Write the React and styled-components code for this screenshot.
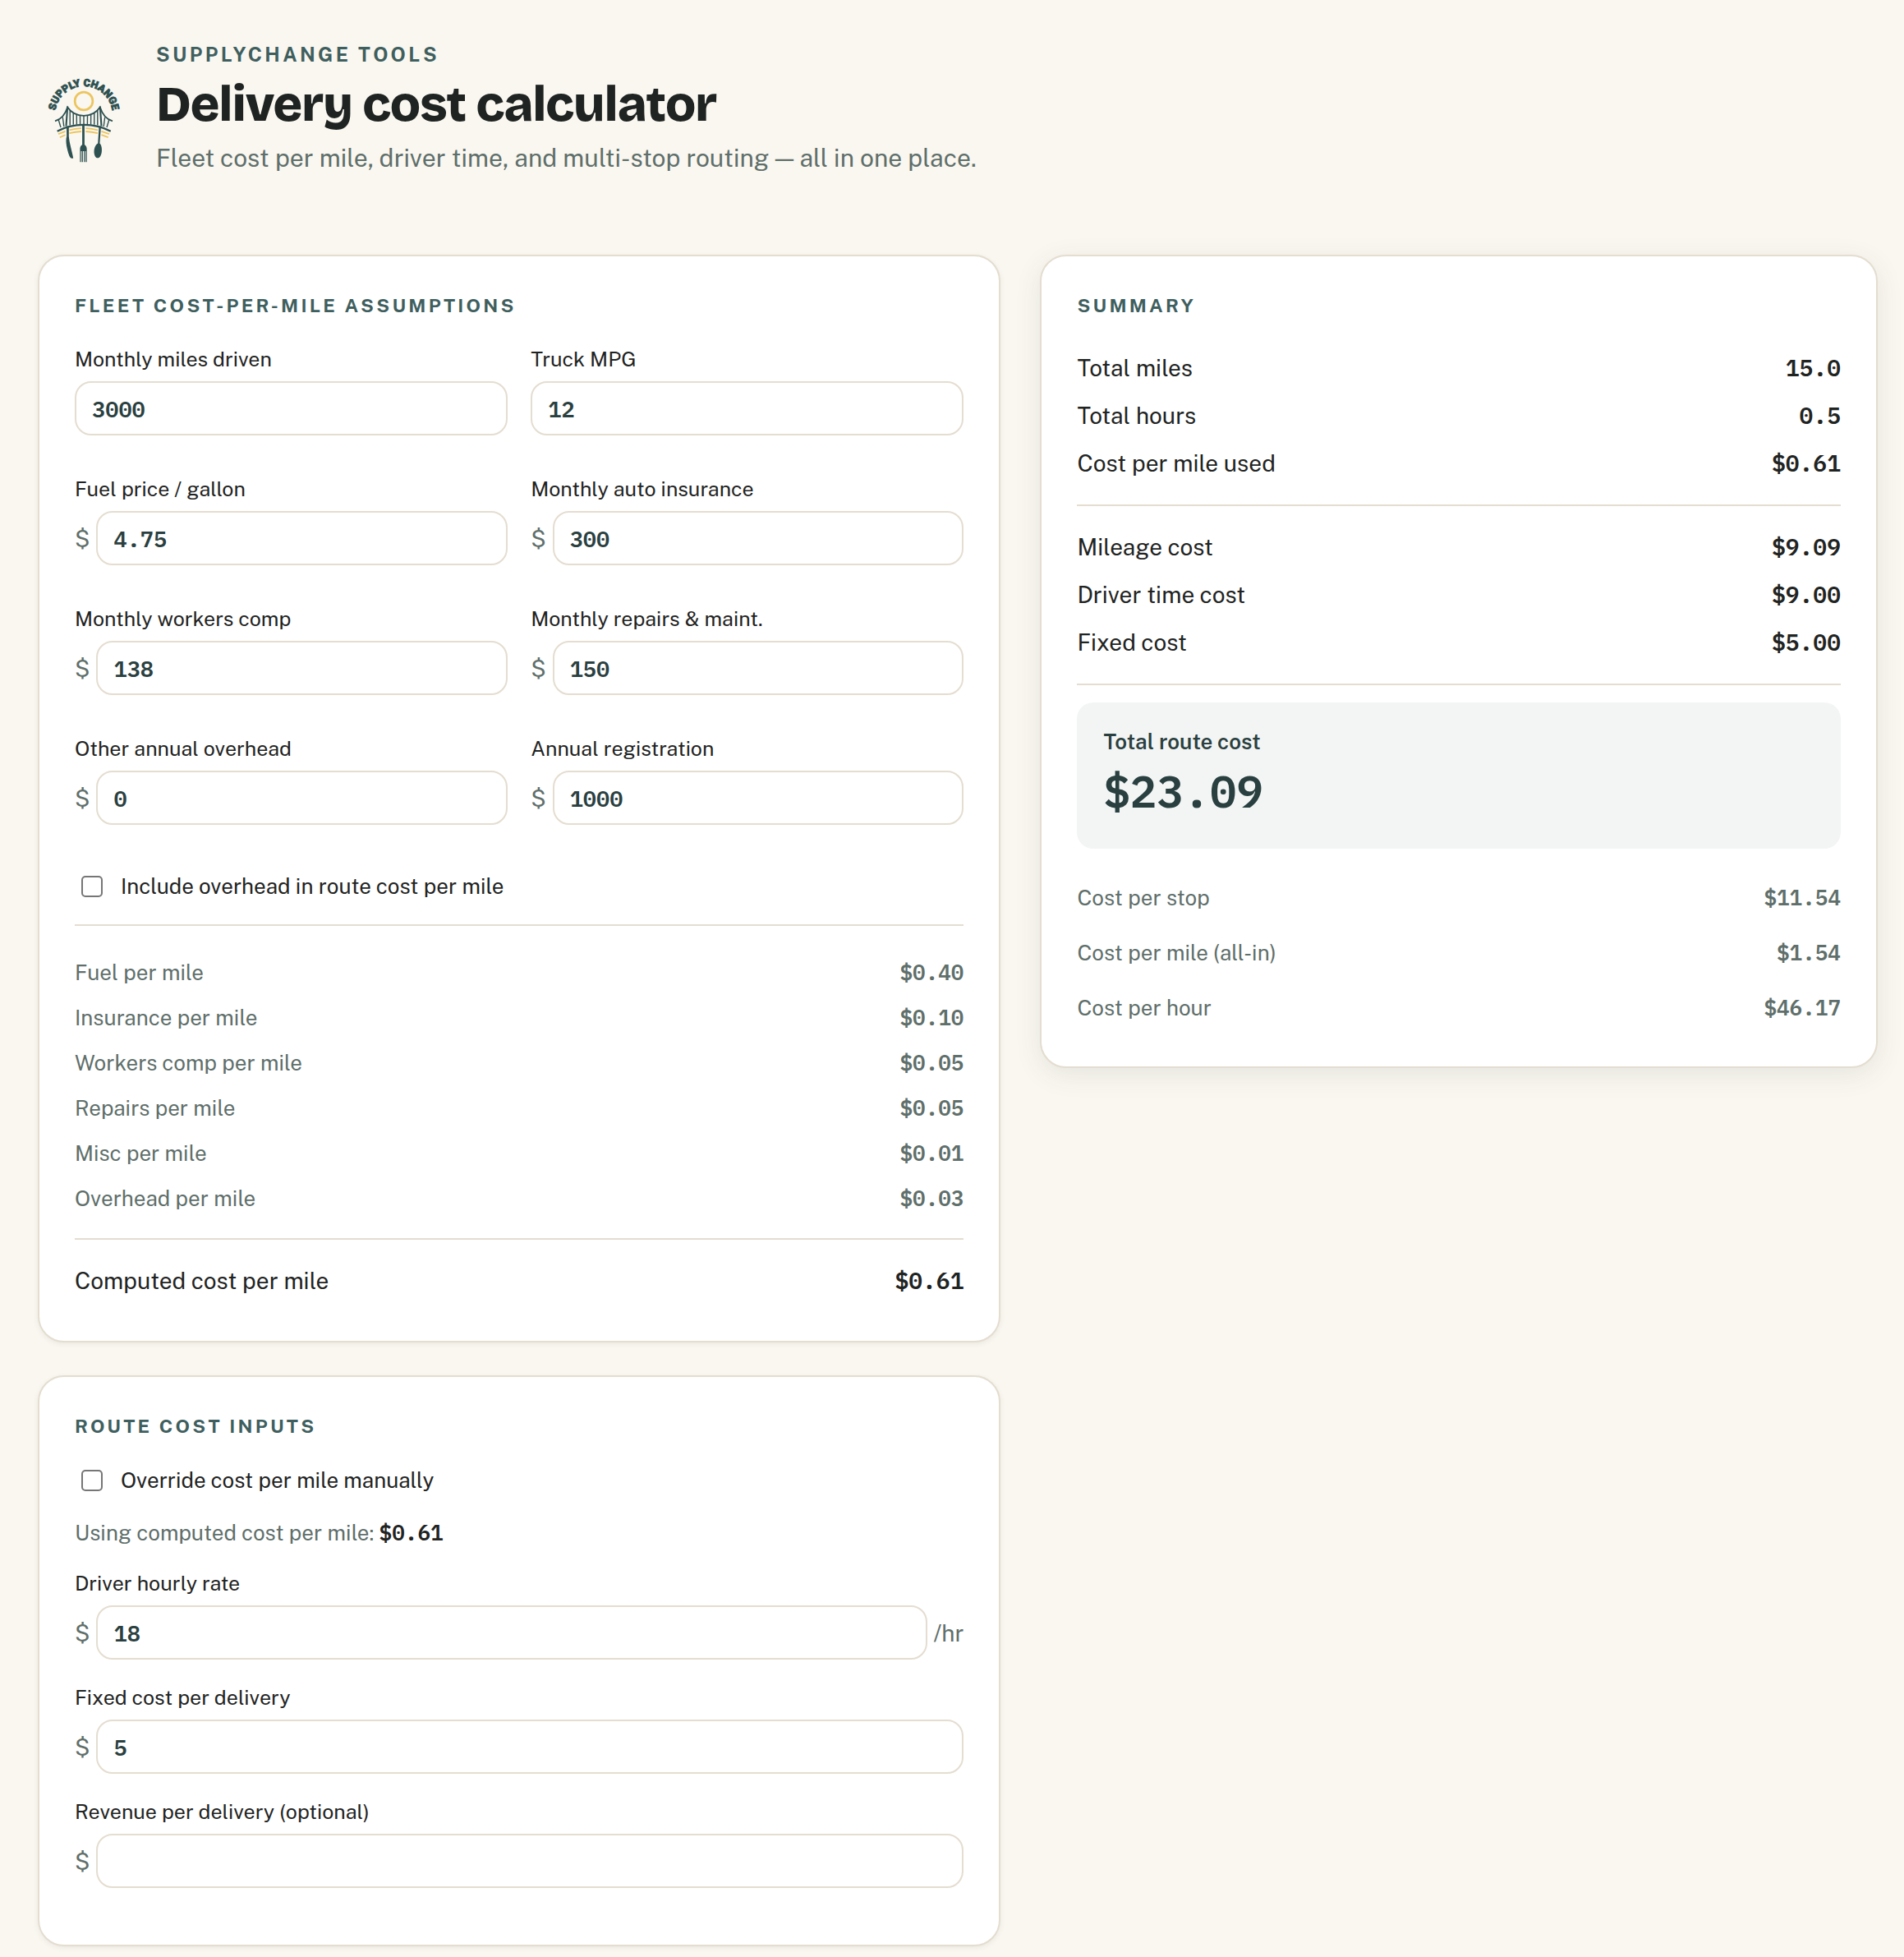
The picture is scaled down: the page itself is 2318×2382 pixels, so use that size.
import React from 'react';
import styled, { createGlobalStyle } from 'styled-components';

const GlobalStyle = createGlobalStyle`
  :root {
    --cream: #faf7f0;
    --sand: #e4ddd0;
    --ink: #1f2423;
    --muted: #5f6f6b;
    --teal: #3f5f5f;
    --deep: #2a4040;
    --sans: 'Public Sans', Inter, 'Liberation Sans', sans-serif;
    --display: 'Bricolage Grotesque', 'Public Sans', Inter, sans-serif;
    --mono: 'IBM Plex Mono', 'Liberation Mono', monospace;
  }

  * {
    box-sizing: border-box;
  }

  body {
    margin: 0;
    background-color: var(--cream);
    color: var(--ink);
    font-family: var(--sans);
    font-size: 26px;
  }
`;

const PageStyles = styled.div`
  max-width: 2318px;
  padding: 48px 32px 12px 46px;
`;

const HeaderStyles = styled.header`
  display: flex;
  align-items: center;
  gap: 32px;
  margin-bottom: 64px;

  svg {
    width: 112px;
    height: 112px;
    flex-shrink: 0;
  }

  h1 {
    margin: 13px 0;
    font-family: var(--display);
    font-size: 61px;
    font-weight: 800;
    line-height: 60px;
    letter-spacing: -0.02em;
  }

  .header__eyebrow {
    margin: 0;
    color: var(--teal);
    font-size: 24px;
    font-weight: 700;
    line-height: 36px;
    letter-spacing: 0.14em;
    text-transform: uppercase;
  }

  .header__lead {
    margin: 0 0 32px;
    color: var(--muted);
    font-size: 30px;
    line-height: 44px;
  }
`;

const Columns = styled.main`
  display: grid;
  grid-template-columns: 1.15fr 1fr;
  gap: 48px;
  align-items: start;

  @media only screen and (max-width: 1100px) {
    grid-template-columns: 1fr;
  }
`;

const Stack = styled.div`
  display: grid;
  gap: 40px;
`;

const Card = styled.section`
  padding: 43px 43px 44px;
  border: 2px solid var(--sand);
  border-radius: 32px;
  background-color: #fff;
  box-shadow: ${({ $raised }) =>
    $raised
      ? '0 8px 32px rgba(42, 64, 64, 0.1)'
      : '0 2px 6px rgba(42, 64, 64, 0.08)'};
`;

const CardTitle = styled.h2`
  margin: 0 0 30px;
  color: var(--teal);
  font-size: 23px;
  font-weight: 700;
  line-height: 34px;
  letter-spacing: 0.14em;
  text-transform: uppercase;
`;

const FieldGrid = styled.div`
  display: grid;
  grid-template-columns: 1fr 1fr;
  gap: 47px 28px;
  margin-bottom: 56px;
`;

const FieldList = styled.div`
  display: grid;
  gap: 28px;
  padding-bottom: 25px;
`;

const FieldStyles = styled.div`
  label {
    display: block;
    margin-bottom: 9px;
    font-size: 25px;
    line-height: 36px;
  }

  .field__control {
    display: flex;
    align-items: center;
    gap: 8px;
    color: var(--muted);
    font-size: 28px;
  }

  input {
    flex: 1;
    min-width: 0;
    height: 66px;
    padding: 0 19px;
    border: 2px solid var(--sand);
    border-radius: 20px;
    background-color: #fff;
    color: var(--deep);
    font-family: var(--mono);
    font-size: 27px;
    font-weight: 600;
  }
`;

const CheckLabel = styled.label`
  display: flex;
  align-items: center;
  gap: 22px;
  padding-left: 8px;
  line-height: 38px;

  input {
    appearance: none;
    width: 26px;
    height: 26px;
    margin: 0;
    border: 2px solid #767676;
    border-radius: 5px;
    background-color: #fff;
  }

  input:checked {
    background-color: var(--teal);
  }
`;

const Note = styled.p`
  margin: 26px 0 25px;
  color: var(--muted);
  line-height: 36px;

  strong {
    color: var(--ink);
    font-family: var(--mono);
    font-weight: 600;
  }
`;

const Divider = styled.hr`
  height: 2px;
  margin: ${({ $loose }) => ($loose ? '27px 0 29px' : '21px 0')};
  border: 0;
  background-color: var(--sand);
`;

const Rows = styled.dl`
  display: grid;
  gap: ${({ $gap }) => $gap || 0}px;
  margin: 0;
  color: ${({ $muted }) => ($muted ? 'var(--muted)' : 'inherit')};
  font-size: ${({ $muted }) => ($muted ? 26 : 28)}px;
  line-height: ${({ $muted }) => ($muted ? 55 : 58)}px;

  div {
    display: flex;
    justify-content: space-between;
    align-items: baseline;
  }

  dd {
    margin: 0;
    font-family: var(--mono);
    font-weight: 600;
  }
`;

const TotalBox = styled.div`
  margin-bottom: 32px;
  padding: 30px 32px 36px;
  border-radius: 20px;
  background-color: #f3f5f4;
  color: var(--deep);

  p {
    margin: 0 0 8px;
    font-size: 26px;
    font-weight: 600;
    line-height: 36px;
  }

  output {
    display: block;
    font-family: var(--mono);
    font-size: 54px;
    font-weight: 600;
    line-height: 68px;
  }
`;

const fleetFields = [
  { id: 'miles', label: 'Monthly miles driven', value: '3000' },
  { id: 'mpg', label: 'Truck MPG', value: '12' },
  { id: 'fuel', label: 'Fuel price / gallon', value: '4.75', prefix: '$' },
  { id: 'insurance', label: 'Monthly auto insurance', value: '300', prefix: '$' },
  { id: 'comp', label: 'Monthly workers comp', value: '138', prefix: '$' },
  { id: 'repairs', label: 'Monthly repairs & maint.', value: '150', prefix: '$' },
  { id: 'overhead', label: 'Other annual overhead', value: '0', prefix: '$' },
  { id: 'registration', label: 'Annual registration', value: '1000', prefix: '$' },
];

const routeFields = [
  { id: 'rate', label: 'Driver hourly rate', value: '18', prefix: '$', suffix: '/hr' },
  { id: 'fixed', label: 'Fixed cost per delivery', value: '5', prefix: '$' },
  { id: 'revenue', label: 'Revenue per delivery (optional)', value: '', prefix: '$' },
];

const perMile = [
  ['Fuel per mile', '$0.40'],
  ['Insurance per mile', '$0.10'],
  ['Workers comp per mile', '$0.05'],
  ['Repairs per mile', '$0.05'],
  ['Misc per mile', '$0.01'],
  ['Overhead per mile', '$0.03'],
];

const totals = [
  ['Total miles', '15.0'],
  ['Total hours', '0.5'],
  ['Cost per mile used', '$0.61'],
];

const costs = [
  ['Mileage cost', '$9.09'],
  ['Driver time cost', '$9.00'],
  ['Fixed cost', '$5.00'],
];

const averages = [
  ['Cost per stop', '$11.54'],
  ['Cost per mile (all-in)', '$1.54'],
  ['Cost per hour', '$46.17'],
];

function Field({ id, label, value, prefix, suffix }) {
  return (
    <FieldStyles>
      <label htmlFor={id}>{label}</label>
      <div className="field__control">
        {prefix && <span>{prefix}</span>}
        <input id={id} type="text" inputMode="decimal" defaultValue={value} />
        {suffix && <span>{suffix}</span>}
      </div>
    </FieldStyles>
  );
}

function RowList({ rows, muted, gap }) {
  return (
    <Rows $muted={muted} $gap={gap}>
      {rows.map(([name, amount]) => (
        <div key={name}>
          <dt>{name}</dt>
          <dd>{amount}</dd>
        </div>
      ))}
    </Rows>
  );
}

function Logo() {
  return (
    <svg viewBox="6 11 112 112" role="img" aria-label="Supply Change">
      <path id="logo-arc" d="M27 70V60A35 35 0 0 1 97 60V70" fill="none" />
      <text
        fill="#2d5050"
        stroke="#2d5050"
        strokeWidth="0.8"
        fontFamily="Roboto, sans-serif"
        fontWeight="900"
        fontSize="12.6"
        textAnchor="middle"
      >
        <textPath href="#logo-arc" startOffset="50%">
          SUPPLY CHANGE
        </textPath>
      </text>
      <circle cx="62" cy="43" r="10.9" fill="none" stroke="#ecc55f" strokeWidth="2.7" />
      <g fill="none" stroke="#2d5050">
        <path
          d="M27 67.3C34 65.5 39.5 59 42.2 50.5C47 57.5 54 60.8 62 60.8S77 57.5 81.8 50.5C84.5 59 90 65.5 97 67.3"
          strokeWidth="1.8"
        />
        <path d="M29.7 79.7C49 69.3 75 69.3 94.7 79.7" strokeWidth="2.2" />
        <path d="M42.2 49.5L40.5 73.5M81.8 49.5L83.5 73.5" strokeWidth="2.1" />
        <path
          d="M31.3 66L34 75M36.3 62.5L37.8 74M45.2 54L45.2 72.5M49.2 57.5L49.3 71.8M53.3 59.5L53.4 71.5M57.5 60.5L57.6 71M62 61V71M66.5 60.5L66.4 71M70.7 59.5L70.6 71.5M74.8 57.5L74.7 71.8M78.8 54V72.5M87.7 62.5L86.2 74M92.7 66L90 75"
          strokeWidth="1.4"
        />
      </g>
      <g fill="none" stroke="#ecc55f" strokeWidth="1.8">
        <path d="M31 83.2L39.5 79.8M44.5 78.3Q51.5 76.4 59 76.1M64.5 76.1Q72 76.4 79 78.3M83.5 79.8L93 83.2" />
        <path d="M32.8 87.2L39.5 84.2M44.5 82.2Q51.5 80.3 59 80M64.5 80Q72 80.3 79 82.2M83.5 84.2L91.7 87.2" />
      </g>
      <g fill="#2d5050">
        <path d="M41 73.5H43.8V86C44.6 95 48 105 49.2 112.4C46.6 113.4 45.2 112 44.3 109.5C41.8 102.5 39.2 92 41.2 86Z" />
        <path d="M60.1 71.5H62.9V96C65 97.5 65.7 99 65.7 102V117.3H64.5V104H63.6V117.3H62.3V104H60.9V117.3H59.6V104H58.6V117.3H57.4V102C57.4 99 58 97.5 60.1 96Z" />
        <path d="M80.6 73.5H83L81.4 94.5C85.6 98 84.6 112.3 79 112.3S72.8 98 79.2 94.5Z" />
      </g>
    </svg>
  );
}

export default function App() {
  return (
    <PageStyles>
      <GlobalStyle />
      <HeaderStyles>
        <Logo />
        <div>
          <p className="header__eyebrow">SupplyChange Tools</p>
          <h1>Delivery cost calculator</h1>
          <p className="header__lead">
            Fleet cost per mile, driver time, and multi-stop routing — all in one place.
          </p>
        </div>
      </HeaderStyles>

      <Columns>
        <Stack>
          <Card>
            <CardTitle>Fleet cost-per-mile assumptions</CardTitle>
            <FieldGrid>
              {fleetFields.map((field) => (
                <Field key={field.id} {...field} />
              ))}
            </FieldGrid>
            <CheckLabel>
              <input type="checkbox" />
              Include overhead in route cost per mile
            </CheckLabel>
            <Divider $loose />
            <RowList rows={perMile} muted />
            <Divider />
            <RowList rows={[['Computed cost per mile', '$0.61']]} />
          </Card>

          <Card>
            <CardTitle>Route cost inputs</CardTitle>
            <CheckLabel>
              <input type="checkbox" />
              Override cost per mile manually
            </CheckLabel>
            <Note>
              Using computed cost per mile: <strong>$0.61</strong>
            </Note>
            <FieldList>
              {routeFields.map((field) => (
                <Field key={field.id} {...field} />
              ))}
            </FieldList>
          </Card>
        </Stack>

        <Card $raised>
          <CardTitle>Summary</CardTitle>
          <RowList rows={totals} />
          <Divider />
          <RowList rows={costs} />
          <Divider />
          <TotalBox>
            <p>Total route cost</p>
            <output>$23.09</output>
          </TotalBox>
          <RowList rows={averages} muted gap={12} />
        </Card>
      </Columns>
    </PageStyles>
  );
}
